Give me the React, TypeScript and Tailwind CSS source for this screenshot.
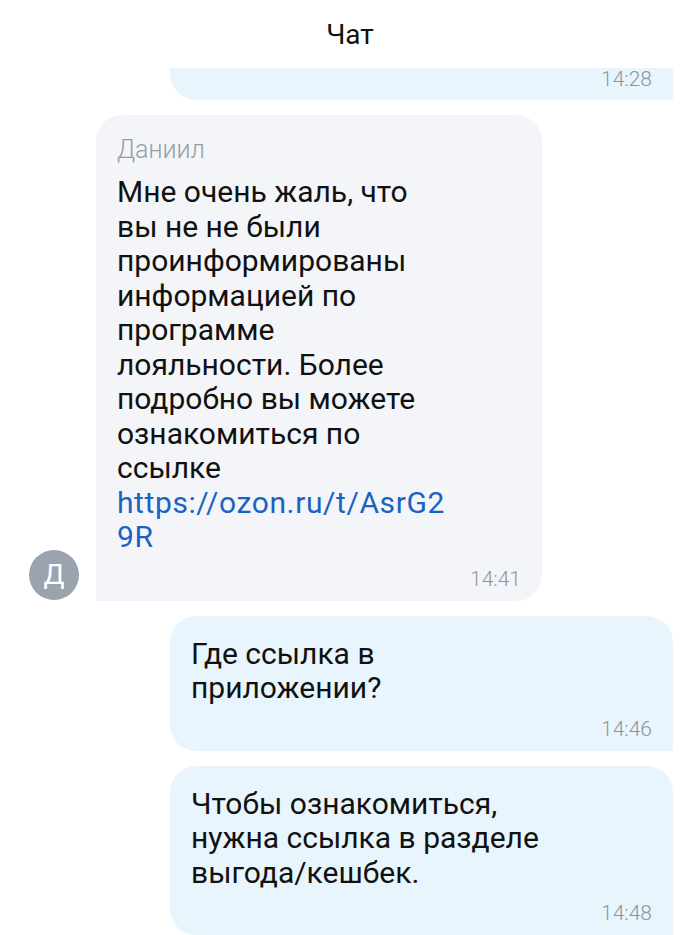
const font = 'font-["Roboto","Noto_Sans",sans-serif]';

function Time({ t }: { t: string }) {
  return (
    <div className="flex justify-end">
      <span className="text-[21px] leading-[24px] font-light text-[#8d949c]">{t}</span>
    </div>
  );
}

function Outgoing({ lines, time }: { lines: string[]; time: string }) {
  return (
    <div className="flex justify-end pr-[27px]">
      <div className="w-[503px] bg-[#e8f5fd] rounded-t-[26px] rounded-bl-[26px] pt-[21px] pb-[10px] px-[21px]">
        <p className="text-[30px] leading-[34.5px] text-[#111] whitespace-nowrap">
          {lines.map((l, i) => (
            <span key={i} className="block">{l}</span>
          ))}
        </p>
        <div className="mt-[11px]">
          <Time t={time} />
        </div>
      </div>
    </div>
  );
}

const incoming = [
  'Мне очень жаль, что',
  'вы не не были',
  'проинформированы',
  'информацией по',
  'программе',
  'лояльности. Более',
  'подробно вы можете',
  'ознакомиться по',
  'ссылке',
];

export default function App() {
  return (
    <div className={`${font} bg-white w-[700px] h-[935px] overflow-hidden flex flex-col`}>
      <header className="h-[68px] shrink-0 flex items-center justify-center">
        <h1 className="text-[28px] text-[#111] leading-none pt-[2px]">Чат</h1>
      </header>

      <div className="flex flex-col gap-[15px]">
        {/* partially scrolled-off message */}
        <div className="flex justify-end pr-[27px]">
          <div className="w-[503px] h-[32px] bg-[#e8f5fd] rounded-bl-[26px] px-[21px] flex items-end pb-[9px] justify-end">
            <span className="text-[21px] leading-[24px] font-light text-[#8d949c]">14:28</span>
          </div>
        </div>

        <div className="flex items-end pl-[29px] gap-[17px]">
          <div className="w-[50px] h-[50px] rounded-full bg-[#9aa3ae] flex items-center justify-center mb-[1px]">
            <span className="text-white text-[28px] leading-none">Д</span>
          </div>
          <div className="w-[446px] bg-[#f4f5f8] rounded-t-[26px] rounded-br-[26px] pt-[21px] pb-[10px] px-[21px]">
            <div className="text-[25px] leading-[28px] font-light text-[#979ea6]">Даниил</div>
            <p className="mt-[11px] text-[30px] leading-[34.5px] text-[#111] whitespace-nowrap">
              {incoming.map((l, i) => (
                <span key={i} className="block">{l}</span>
              ))}
              <span className="block text-[#1a63c4] tracking-[0.6px]">https://ozon.ru/t/AsrG2</span>
              <span className="block text-[#1a63c4] tracking-[0.6px]">9R</span>
            </p>
            <div className="mt-[12px]">
              <Time t="14:41" />
            </div>
          </div>
        </div>

        <Outgoing lines={['Где ссылка в', 'приложении?']} time="14:46" />
        <Outgoing
          lines={['Чтобы ознакомиться,', 'нужна ссылка в разделе', 'выгода/кешбек.']}
          time="14:48"
        />
      </div>
    </div>
  );
}
